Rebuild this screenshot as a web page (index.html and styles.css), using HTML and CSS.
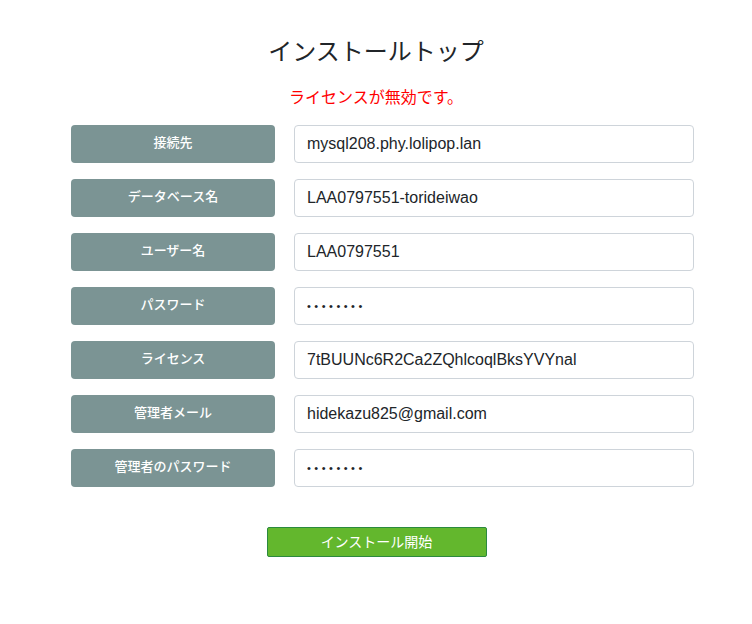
FILE: index.html
```html
<!DOCTYPE html>
<html lang="ja">
<head>
    <meta charset="UTF-8">
    <meta name="viewport" content="width=device-width, initial-scale=1.0">
    <title>インストールトップ</title>
    <link rel="stylesheet" href="styles.css">
</head>
<body>
    <div class="container">
        <h1>インストールトップ</h1>
        <p class="error">ライセンスが無効です。</p>

        <form class="install-form">
            <div class="rows">
                <div class="row">
                    <label class="label" for="host">接続先</label>
                    <input type="text" id="host" value="mysql208.phy.lolipop.lan">
                </div>
                <div class="row">
                    <label class="label" for="dbname">データベース名</label>
                    <input type="text" id="dbname" value="LAA0797551-torideiwao">
                </div>
                <div class="row">
                    <label class="label" for="user">ユーザー名</label>
                    <input type="text" id="user" value="LAA0797551">
                </div>
                <div class="row">
                    <label class="label" for="pass">パスワード</label>
                    <input type="password" id="pass" value="12345678">
                </div>
                <div class="row">
                    <label class="label" for="license">ライセンス</label>
                    <input type="text" id="license" value="7tBUUNc6R2Ca2ZQhlcoqlBksYVYnal">
                </div>
                <div class="row">
                    <label class="label" for="mail">管理者メール</label>
                    <input type="text" id="mail" value="hidekazu825@gmail.com">
                </div>
                <div class="row">
                    <label class="label" for="adminpass">管理者のパスワード</label>
                    <input type="password" id="adminpass" value="12345678">
                </div>
            </div>

            <button type="submit">インストール開始</button>
        </form>
    </div>
</body>
</html>
```

FILE: styles.css
```css
:root {
    --text-color: #212529;
    --label-color: #7b9494;
    --border-color: #ced4da;
    --button-color: #63b72d;
    --button-border: #2b8a3e;
}

body {
    margin: 0;
    font-family: "Liberation Sans", "Noto Sans CJK JP", sans-serif;
    color: var(--text-color);
    background: #ffffff;
}

.container {
    padding: 0 0 40px;
}

h1 {
    margin: 38px 0 0;
    font-size: 24px;
    line-height: 28px;
    font-weight: 400;
    text-align: center;
}

.error {
    margin: 20px 0 0;
    color: #ff0000;
    font-size: 16px;
    line-height: 24px;
    text-align: center;
}

.install-form {
    margin-top: 15px;
    display: flex;
    flex-direction: column;
}

.rows {
    display: flex;
    flex-direction: column;
    gap: 16px;
    padding: 0 58px 0 71px;
}

.row {
    display: flex;
    gap: 19px;
    height: 38px;
}

.label {
    width: 204px;
    flex-shrink: 0;
    box-sizing: border-box;
    display: flex;
    align-items: center;
    justify-content: center;
    padding-bottom: 3px;
    background-color: var(--label-color);
    color: #ffffff;
    border-radius: 4px;
    font-size: 13px;
    line-height: 1;
    font-weight: 500;
}

input[type="text"],
input[type="password"] {
    flex: 1;
    box-sizing: border-box;
    height: 38px;
    padding: 0 12px;
    border: 1px solid var(--border-color);
    border-radius: 4px;
    font-family: "Liberation Sans", "Noto Sans CJK JP", sans-serif;
    font-size: 16px;
    color: var(--text-color);
}

input[type="password"] {
    font-size: 11px;
    letter-spacing: 3.5px;
}

button {
    align-self: center;
    margin: 40px 0 0 1px;
    width: 220px;
    height: 30px;
    padding: 0 0 2px;
    background-color: var(--button-color);
    border: 1px solid var(--button-border);
    border-radius: 2px;
    color: #ffffff;
    font-family: "Liberation Sans", "Noto Sans CJK JP", sans-serif;
    font-size: 14px;
    cursor: pointer;
}
```
